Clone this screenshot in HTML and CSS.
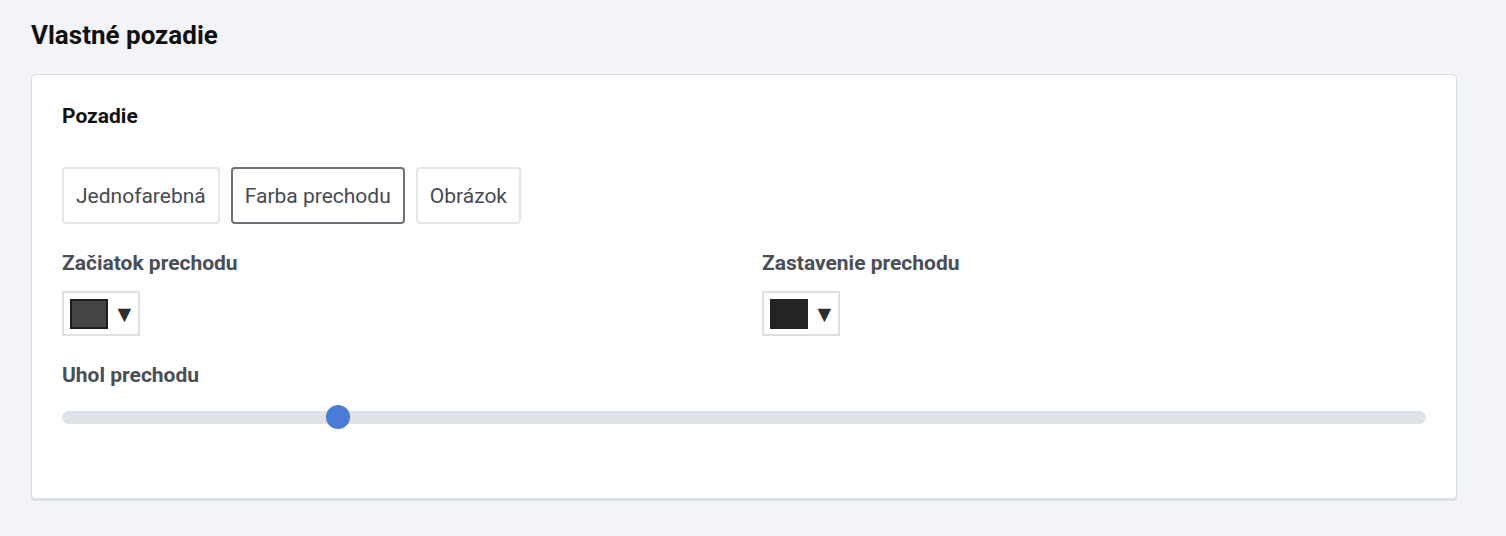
FILE: index.html
```html
<!DOCTYPE html>
<html lang="sk">
<head>
    <meta charset="UTF-8">
    <meta name="viewport" content="width=device-width, initial-scale=1.0">
    <title>Vlastné pozadie</title>
    <link rel="stylesheet" href="styles.css">
</head>
<body>
<div class="page">
    <h2 class="page-title">Vlastné pozadie</h2>

    <div class="card">
        <p class="card-title">Pozadie</p>

        <div class="tabs">
            <button class="tab">Jednofarebná</button>
            <button class="tab active">Farba prechodu</button>
            <button class="tab">Obrázok</button>
        </div>

        <div class="colors">
            <div class="field">
                <p class="label">Začiatok prechodu</p>
                <button class="picker">
                    <span class="swatch start"></span>
                    <span class="arrow">▼</span>
                </button>
            </div>
            <div class="field">
                <p class="label">Zastavenie prechodu</p>
                <button class="picker">
                    <span class="swatch stop"></span>
                    <span class="arrow">▼</span>
                </button>
            </div>
        </div>

        <div class="field">
            <p class="label">Uhol prechodu</p>
            <input type="range" class="slider" min="0" max="360" value="71">
        </div>
    </div>
</div>
</body>
</html>
```

FILE: styles.css
```css
body{
    margin: 0;
    background-color: #f3f4f8;
    font-family: Roboto, "Liberation Sans", sans-serif;
    color: #111;
}
.page{
    padding: 20px 49px 36px 31px;
}
.page-title{
    margin: 0 0 24px 0;
    font-size: 26px;
    line-height: 30px;
    font-weight: bold;
    color: #111;
}
.card{
    background-color: white;
    border: 1px solid #d9dce2;
    border-radius: 4px;
    box-shadow: 0 2px 0 #dde0e6;
    padding: 29px 30px 30px 30px;
}
.card-title{
    margin: 0 0 39px 0;
    font-size: 21px;
    line-height: 24px;
    font-weight: bold;
}
.tabs{
    display: flex;
    gap: 11px;
    margin-bottom: 27px;
}
.tab{
    height: 57px;
    padding: 0 12px;
    background-color: white;
    border: 2px solid #e3e6ea;
    border-radius: 4px;
    font-family: inherit;
    font-size: 21px;
    color: #464a52;
}
.tab.active{
    border-color: #6b7079;
}
.colors{
    display: grid;
    grid-template-columns: 1fr 1fr;
    column-gap: 36px;
    margin-bottom: 27px;
}
.label{
    margin: 0 0 16px 0;
    font-size: 21px;
    line-height: 24px;
    font-weight: bold;
    color: #4a4e56;
}
.picker{
    display: flex;
    align-items: center;
    width: 78px;
    height: 45px;
    padding: 6px 0 5px 6px;
    background-color: white;
    border: 2px solid #e0e0e0;
    box-sizing: border-box;
}
.swatch{
    display: inline-block;
    width: 38px;
    height: 30px;
    box-sizing: border-box;
}
.swatch.start{
    background-color: #444447;
    border: 2px solid #1e1e1e;
}
.swatch.stop{
    background-color: #232426;
}
.arrow{
    margin-left: 5px;
    font-size: 23px;
    color: #2e2e2e;
}
.slider{
    -webkit-appearance: none;
    appearance: none;
    display: block;
    width: 100%;
    height: 24px;
    margin: 18px 0 39px 0;
    background: transparent;
}
.slider::-webkit-slider-runnable-track{
    height: 13px;
    border-radius: 7px;
    background-color: #dfe2e7;
}
.slider::-webkit-slider-thumb{
    -webkit-appearance: none;
    width: 24px;
    height: 24px;
    margin-top: -6px;
    border-radius: 50%;
    background-color: #4a7bd9;
    border: none;
}
```
